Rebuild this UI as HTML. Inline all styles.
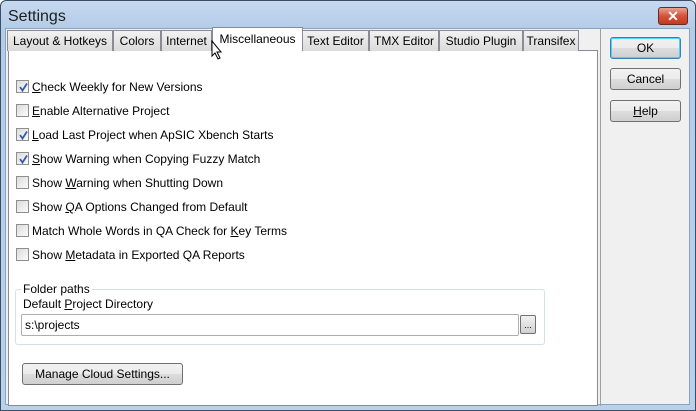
<!DOCTYPE html>
<html><head><style>
*{margin:0;padding:0;box-sizing:border-box}
body{width:696px;height:411px;overflow:hidden;font-family:"Liberation Sans",sans-serif;font-size:12px;color:#000;background:#fff}
.win{position:absolute;left:0;top:0;width:696px;height:411px;border:1px solid #3b4e66;border-radius:6px 6px 0 0;background:linear-gradient(#c6d9ef,#b4cce8 28px,#b9d1ea);}
.title{position:absolute;left:7px;top:7px;font-size:16px;color:#1e1e1e}
.close{position:absolute;left:657px;top:6px;width:30px;height:18px;border:1px solid #6b2a20;border-radius:3px;background:linear-gradient(#e8a493,#d3533a 50%,#c23a20);color:#fff;font-weight:bold;text-align:center;font-size:14px;line-height:16px}
.client{position:absolute;left:5px;top:28px;width:685px;height:377px;background:#f0f0f0;border:1px solid #8aa3bf}
.panel{position:absolute;left:8px;top:50px;width:590px;height:356px;background:#fff;border:1px solid #898c95}
.divider{position:absolute;left:600px;top:29px;width:1px;height:377px;background:#a0a0a0}
.tab{position:absolute;top:30px;height:21px;border:1px solid #898c95;border-bottom:none;background:linear-gradient(#f2f2f2,#dadada);padding:0 0;text-align:center;line-height:20px;font-size:12px}
.tab.sel{top:27px;height:24px;background:#fff;line-height:22px}
.btn{position:absolute;left:610px;width:71px;height:22px;border:1px solid #707070;border-radius:3px;background:linear-gradient(#f2f2f2,#ebebeb 50%,#dddddd 51%,#cfcfcf);text-align:center;line-height:20px}
.cb{position:absolute;left:16px;width:13px;height:13px;border:1px solid #8e8f8f;background:linear-gradient(135deg,#dcdcdc,#fbfbfb)}
.cb svg{position:absolute;left:1px;top:1px}
.lbl{position:absolute;left:32px;line-height:14px}
u{text-decoration:underline}
.grp{position:absolute;left:15px;top:289px;width:530px;height:56px;border:1px solid #d5dfe5;border-radius:3px}
</style></head><body>
<div class="win">
<div class="title">Settings</div>
<div class="close">✕</div>
</div>
<div class="client"></div>
<div class="divider"></div>
<div class="panel"></div>
<div class="tab" style="left:7px;width:106px">Layout &amp; Hotkeys</div>
<div class="tab" style="left:113px;width:48px">Colors</div>
<div class="tab" style="left:161px;width:51px">Internet</div>
<div class="tab" style="left:302px;width:67px">Text Editor</div>
<div class="tab" style="left:369px;width:70px">TMX Editor</div>
<div class="tab" style="left:439px;width:84px">Studio Plugin</div>
<div class="tab" style="left:523px;width:56px">Transifex</div>
<div class="tab sel" style="left:212px;width:91px">Miscellaneous</div>
<svg style="position:absolute;left:211px;top:40px" width="12" height="20"><path d="M1 1 L1 16 L4 13 L7 19 L9 18 L6 12 L10 12 Z" fill="#fff" stroke="#000" stroke-width="1"/></svg>

<div class="btn" style="top:37px;border-color:#3c7fb1;box-shadow:inset 0 0 0 1px #48d2fb">OK</div>
<div class="btn" style="top:68px">Cancel</div>
<div class="btn" style="top:100px"><u>H</u>elp</div>

<div class="cb" style="top:80px"><svg width="11" height="11"><path d="M2 5 L4.5 8.5 L9 1.5" fill="none" stroke="#3b58a8" stroke-width="1.8"/></svg></div>
<div class="lbl" style="top:80px"><u>C</u>heck Weekly for New Versions</div>
<div class="cb" style="top:104px"></div>
<div class="lbl" style="top:104px"><u>E</u>nable Alternative Project</div>
<div class="cb" style="top:128px"><svg width="11" height="11"><path d="M2 5 L4.5 8.5 L9 1.5" fill="none" stroke="#3b58a8" stroke-width="1.8"/></svg></div>
<div class="lbl" style="top:128px"><u>L</u>oad Last Project when ApSIC Xbench Starts</div>
<div class="cb" style="top:152px"><svg width="11" height="11"><path d="M2 5 L4.5 8.5 L9 1.5" fill="none" stroke="#3b58a8" stroke-width="1.8"/></svg></div>
<div class="lbl" style="top:152px"><u>S</u>how Warning when Copying Fuzzy Match</div>
<div class="cb" style="top:176px"></div>
<div class="lbl" style="top:176px">Show <u>W</u>arning when Shutting Down</div>
<div class="cb" style="top:200px"></div>
<div class="lbl" style="top:200px">Show <u>Q</u>A Options Changed from Default</div>
<div class="cb" style="top:224px"></div>
<div class="lbl" style="top:224px">Match Whole Words in QA Check for <u>K</u>ey Terms</div>
<div class="cb" style="top:248px"></div>
<div class="lbl" style="top:248px">Show <u>M</u>etadata in Exported QA Reports</div>

<div class="grp"></div>
<div style="position:absolute;left:21px;top:282px;background:#fff;padding:0 2px;line-height:14px">Folder paths</div>
<div style="position:absolute;left:23px;top:297px;line-height:14px">Default <u>P</u>roject Directory</div>
<div style="position:absolute;left:21px;top:314px;width:498px;height:22px;border:1px solid #abadb3;border-radius:2px;padding-left:3px;line-height:20px">s:\projects</div>
<div style="position:absolute;left:520px;top:315px;width:16px;height:19px;border:1px solid #707070;border-radius:2px;background:linear-gradient(#f2f2f2,#d0d0d0);font-size:9px;text-align:center;line-height:18px">...</div>
<div style="position:absolute;left:22px;top:363px;width:161px;height:22px;border:1px solid #707070;border-radius:3px;background:linear-gradient(#f2f2f2,#ebebeb 50%,#dddddd 51%,#cfcfcf);text-align:center;line-height:20px">Manage Cloud Settings...</div>
</body></html>
